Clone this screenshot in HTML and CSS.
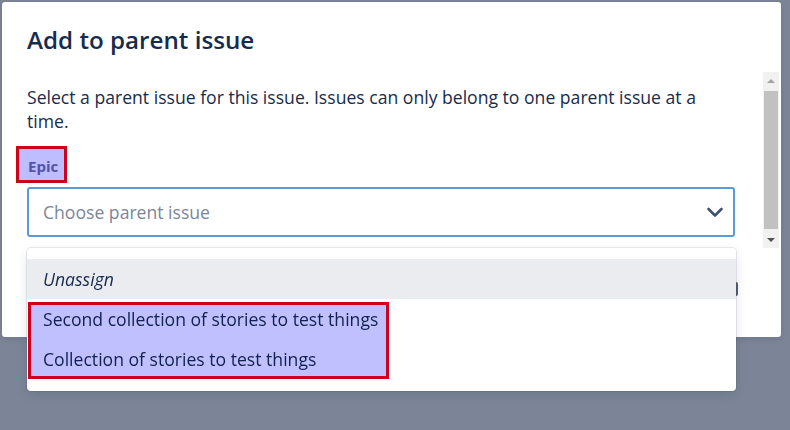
FILE: index.html
```html
<!DOCTYPE html>
<html lang="en">
<head>
<meta charset="utf-8">
<title>Add to parent issue</title>
<link rel="stylesheet" href="styles.css">
</head>
<body>
<div class="screen">
  <section class="modal" role="dialog" aria-labelledby="modal-title">
    <header class="modal-header">
      <h1 id="modal-title" class="modal-title">Add to parent issue</h1>
    </header>
    <div class="modal-body">
      <div class="body-content">
        <p class="intro">Select a parent issue for this issue. Issues can only belong to one parent issue at a time.</p>
        <div class="field">
          <div class="label-row"><span class="field-label">Epic</span></div>
          <div class="select-wrap">
            <div class="select">
              <span class="placeholder">Choose parent issue</span>
              <svg class="chevron" width="24" height="24" viewBox="0 0 24 24" aria-hidden="true">
                <path d="M5.5 9 L12 15.5 L18.5 9" fill="none" stroke="#42526e" stroke-width="2.6" stroke-linecap="round" stroke-linejoin="round"/>
              </svg>
            </div>
            <div class="menu" role="listbox">
              <div class="option option-unassign">Unassign</div>
              <div class="option">Second collection of stories to test things</div>
              <div class="option">Collection of stories to test things</div>
              <div class="highlight-box"></div>
            </div>
          </div>
        </div>
      </div>
      <div class="scrollbar" aria-hidden="true">
        <div class="sb-button"><span class="arrow-up"></span></div>
        <div class="sb-track"><div class="sb-thumb"></div></div>
        <div class="sb-button"><span class="arrow-down"></span></div>
      </div>
    </div>
    <footer class="modal-footer">
      <span class="footer-button"></span>
    </footer>
  </section>
</div>
</body>
</html>
```
FILE: styles.css
```css
* {
  box-sizing: border-box;
}

html,
body {
  margin: 0;
  padding: 0;
}

body {
  background: #7c8597;
  font-family: "Open Sans", "Noto Sans", sans-serif;
  color: #172b4d;
  width: 790px;
  height: 430px;
  overflow: hidden;
}

.screen {
  padding: 2px 0 0 2px;
}

.modal {
  width: 779px;
  height: 335px;
  background: #ffffff;
  border-radius: 3px;
  box-shadow: 0 2px 6px rgba(9, 30, 66, 0.12);
  display: flex;
  flex-direction: column;
}

.modal-header {
  height: 70px;
  padding: 23px 25px 0 25px;
}

.modal-title {
  margin: 0;
  font-size: 24.2px;
  line-height: 30px;
  font-weight: 600;
  color: #172b4d;
}

.modal-body {
  height: 176px;
  display: flex;
  flex-direction: row;
  padding-right: 2px;
}

.body-content {
  flex: 1;
  padding: 13px 28px 0 25px;
}

.intro {
  margin: 0;
  max-width: 690px;
  font-size: 17.6px;
  line-height: 24px;
  color: #172b4d;
}

.field {
  margin-top: 13px;
  display: flex;
  flex-direction: column;
}

.label-row {
  display: flex;
  margin-left: -11px;
  margin-bottom: 4px;
}

.field-label {
  display: block;
  border: 3px solid #d0021b;
  background: #bdbdff;
  color: #5454a8;
  font-size: 15px;
  line-height: 18px;
  font-weight: 700;
  padding: 8px 6px 5px 9px;
}

.select-wrap {
  position: relative;
}

.select {
  height: 50px;
  border: 2px solid #5b9bd8;
  border-radius: 3px;
  background: #ffffff;
  display: flex;
  align-items: center;
  justify-content: space-between;
  padding: 0 6px 0 14px;
}

.placeholder {
  font-size: 17.6px;
  line-height: 24px;
  color: #7a869a;
}

.chevron {
  display: block;
  flex: none;
}

.menu {
  position: absolute;
  top: calc(100% + 11px);
  left: 0;
  width: calc(100% + 1px);
  background: #ffffff;
  border-radius: 4px;
  padding: 11px 0 12px 0;
  box-shadow: 0 0 0 1px rgba(9, 30, 66, 0.09), 0 4px 11px rgba(9, 30, 66, 0.12);
  z-index: 10;
  isolation: isolate;
}

.option {
  height: 40px;
  padding: 8px 16px;
  font-size: 17.6px;
  line-height: 24px;
  color: #172b4d;
  white-space: nowrap;
}

.option-unassign {
  background: #ebecf0;
  font-style: italic;
}

.highlight-box {
  position: absolute;
  left: 1px;
  top: 54px;
  width: 361px;
  height: 77px;
  border: 3px solid #d0021b;
  background: #c0c0ff;
  mix-blend-mode: multiply;
  pointer-events: none;
}

.scrollbar {
  width: 16px;
  flex: none;
  background: #f1f1f1;
  display: flex;
  flex-direction: column;
}

.sb-button {
  height: 17px;
  display: flex;
  align-items: center;
  justify-content: center;
}

.arrow-up {
  width: 0;
  height: 0;
  border-left: 4px solid transparent;
  border-right: 4px solid transparent;
  border-bottom: 4px solid #a3a3a3;
}

.arrow-down {
  width: 0;
  height: 0;
  border-left: 4px solid transparent;
  border-right: 4px solid transparent;
  border-top: 4px solid #505050;
}

.sb-track {
  flex: 1;
  padding: 2px 1px;
  display: flex;
}

.sb-thumb {
  flex: 1;
  background: #c1c1c1;
}

.modal-footer {
  flex: 1;
  display: flex;
  justify-content: flex-end;
  align-items: flex-start;
  padding: 34px 43px 0 0;
}

.footer-button {
  display: block;
  width: 60px;
  height: 14px;
  background: #505f79;
  border-radius: 2px;
}
```
